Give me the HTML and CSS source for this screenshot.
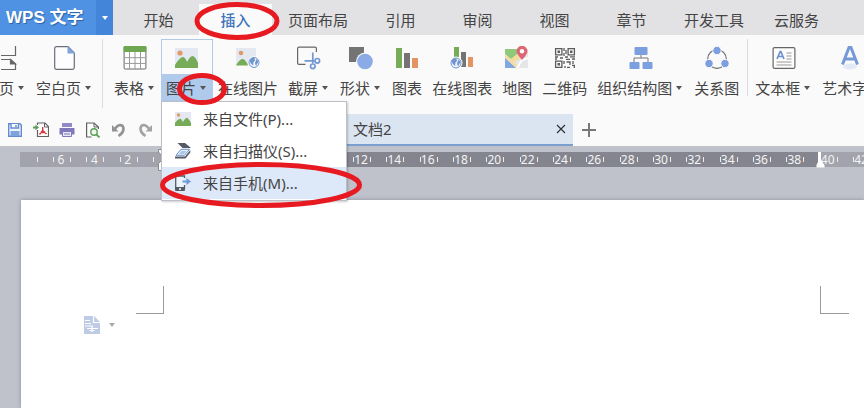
FILE: index.html
```html
<!DOCTYPE html>
<html lang="zh-CN">
<head>
<meta charset="utf-8">
<title>WPS 文字</title>
<link rel="stylesheet" href="styles.css">
</head>
<body>
<header class="topbar">
  <button class="brand" type="button"><span class="brand-name">WPS 文字</span><span class="brand-drop"><i class="caret"></i></span></button>
  <nav class="tabs">
    <a class="tab" href="#">开始</a>
    <a class="tab active" href="#">插入
      <svg class="ring ring-tab" viewBox="0 0 86 38"><ellipse cx="43" cy="19" rx="40" ry="16.5"/></svg></a>
    <a class="tab" href="#">页面布局</a>
    <a class="tab" href="#">引用</a>
    <a class="tab" href="#">审阅</a>
    <a class="tab" href="#">视图</a>
    <a class="tab" href="#">章节</a>
    <a class="tab" href="#">开发工具</a>
    <a class="tab" href="#">云服务</a>
  </nav>
</header>

<section class="ribbon">
  <button class="tool" type="button">
    <span class="tool-icon"><svg viewBox="0 0 24 24" fill="none" stroke="#666" stroke-width="1.2"><path d="M0 9.500H14.500V0M0 13.500H9.500L14.500 18V23.500H0"/><path d="M9.500 13.500V18H14.500Z" fill="#666"/></svg></span>
    <span class="tool-label">页<i class="caret"></i></span>
  </button>
  <button class="tool" type="button">
    <span class="tool-icon"><svg viewBox="0 0 24 24"><path d="M3.500.7H15L21.300 7V21.500Q21.300 23.300 19.500 23.300H3.500Q1.700 23.300 1.700 21.500V2.500Q1.700.7 3.500.7Z" fill="#fdfdfe" stroke="#6b6e78" stroke-width="1.200"/><path d="M14.500 0V7.500H22Z" fill="#7da3dc"/></svg></span>
    <span class="tool-label">空白页<i class="caret"></i></span>
  </button>
  <span class="divider"></span>
  <button class="tool" type="button">
    <span class="tool-icon"><svg viewBox="0 0 24 24"><rect x="1.100" y=".6" width="21.800" height="22.400" rx="1" fill="#fff" stroke="#666"/><path d="M1.500 11.700H22.500M1.500 17.400H22.500M6.500 6V23M12 6V23M17.500 6V23" stroke="#999" fill="none"/><rect x=".6" width="22.800" height="6" rx="1" fill="#6fa650"/></svg></span>
    <span class="tool-label">表格<i class="caret"></i></span>
  </button>
  <div class="menu-host">
    <button class="tool open" type="button" aria-haspopup="menu" aria-expanded="true">
      <span class="tool-icon"><svg viewBox="0 0 24 24"><rect y="2" width="23" height="20" fill="#e3e8f1"/><circle cx="5" cy="7" r="2.600" fill="#e09a69"/><path d="M0 22V19Q5 11 8 11Q10 11 12 16Q15 10 17.500 10Q20 10 23 17V22Z" fill="#76ab57"/></svg></span>
      <span class="tool-label">图片<i class="caret"></i></span>
    </button>
    <div class="menu" role="menu">
      <button class="item" type="button" role="menuitem"><svg viewBox="0 0 16 16"><rect y="1" width="16" height="14" fill="#e3e8f1"/><circle cx="3.500" cy="4" r="1.700" fill="#e09a69"/><path d="M0 15V12Q4 7 6 8L8 11Q11 6 12.500 7Q14 8 16 12V15Z" fill="#76ab57"/></svg>来自文件(P)...</button>
      <button class="item" type="button" role="menuitem"><svg viewBox="0 0 16 16"><path d="M2.500 0H10L16 5H7.500Z" fill="#555b66"/><path d="M6 6.300H14.500L9.500 12.300H1Z" fill="#e6effc" stroke="#6e93cc"/><path d="M6.500 8H11.500L9 11H4Z" fill="#a9c5ec"/><path d="M0 13.500H10L15.300 7V9.500L10.500 15.500H0Z" fill="#555b66"/></svg>来自扫描仪(S)...</button>
      <button class="item current" type="button" role="menuitem"><svg viewBox="0 0 16 16"><path d="M9.500 3V1H.7V13H9.500V10" fill="#edf3fc" stroke="#555b66" stroke-width="1.300"/><path d="M0 12H10V15Q10 16 9 16H1Q0 16 0 15Z" fill="#555b66"/><path d="M4 13.300H6V14.800H4Z" fill="#fff"/><path d="M7.500 5.500H11.500V3L16 6.500L11.500 10V7.500H7.500Z" fill="#6c9bd9"/></svg>来自手机(M)...</button>
      <svg class="ring ring-item" viewBox="0 0 202 46"><ellipse cx="101" cy="23" rx="98.500" ry="20.500"/></svg>
    </div>
    <svg class="ring ring-drop" viewBox="0 0 50 32"><ellipse cx="25" cy="16" rx="22.500" ry="13.500"/></svg>
  </div>
  <button class="tool" type="button">
    <span class="tool-icon"><svg viewBox="0 0 24 24"><rect y="2" width="20" height="17" fill="#e3e8f1"/><circle cx="5" cy="7" r="2.300" fill="#e09a69"/><path d="M0 19.500Q4 12 7 13Q10 14 12 19.500Z" fill="#76ab57"/><circle cx="18" cy="16.500" r="6.200" fill="#fafafa"/><circle cx="18" cy="16.500" r="5" fill="#eef3fb" stroke="#6f95cf"/><path d="M13.500 14L16 12H18.500L19 14.500L17.500 16L17 19.500L14.500 17ZM20.500 13L22.500 15.500L20 20L19 17Z" fill="#6f95cf"/></svg></span>
    <span class="tool-label">在线图片</span>
  </button>
  <button class="tool" type="button">
    <span class="tool-icon"><svg viewBox="0 0 24 24" fill="none"><path d="M8.500 18.400H2Q.6 18.400.6 17V2.500Q.6 1.100 2 1.100H18Q19.400 1.100 19.400 2.500V6" stroke="#666" stroke-width="1.200"/><g stroke="#7397d3" stroke-width="1.700"><path d="M7.500 14.800H17.500M15.800 6.500V17.500"/><circle cx="20.300" cy="14.800" r="2.300"/><circle cx="15.800" cy="20.300" r="2.300"/></g></svg></span>
    <span class="tool-label">截屏<i class="caret"></i></span>
  </button>
  <button class="tool" type="button">
    <span class="tool-icon"><svg viewBox="0 0 24 24"><rect y="1" width="15" height="15" fill="#747474"/><circle cx="16" cy="15.500" r="9" fill="#fafafa"/><circle cx="16" cy="15.500" r="7.800" fill="#8aabe6"/></svg></span>
    <span class="tool-label">形状<i class="caret"></i></span>
  </button>
  <button class="tool" type="button">
    <span class="tool-icon"><svg viewBox="0 0 24 24"><rect x="1" y="2" width="6" height="20" fill="#76ab57"/><rect x="9" y="7" width="6" height="15" fill="#747474"/><rect x="17" y="12" width="6" height="10" fill="#e39462"/></svg></span>
    <span class="tool-label">图表</span>
  </button>
  <button class="tool" type="button">
    <span class="tool-icon"><svg viewBox="0 0 24 24"><rect x="4" y="1" width="5" height="14" fill="#76ab57"/><rect x="11" y="6" width="5" height="15" fill="#747474"/><rect x="18" y="11" width="5" height="10" fill="#e39462"/><circle cx="6" cy="17" r="6.500" fill="#fafafa"/><circle cx="6" cy="17" r="5" fill="#eef3fb" stroke="#6f95cf"/><path d="M1.500 14.500L4 12.500H6.500L7 15L5.500 16.500L5 20L2.500 17.500ZM8.500 13.500L10.500 16L8 20.500L7 17.500Z" fill="#6f95cf"/></svg></span>
    <span class="tool-label">在线图表</span>
  </button>
  <button class="tool" type="button">
    <span class="tool-icon"><svg viewBox="0 0 24 24"><rect y="3" width="23" height="19" fill="#e6e6e8"/><path d="M0 3H14L12 9L6 13L0 8Z" fill="#8fca7b"/><path d="M0 12L11 22H0Z" fill="#83a7df"/><path d="M0 9.500L13 22" stroke="#f4dc9c" stroke-width="2.500"/><path d="M6 13L12 8L15 13L7 17Z" fill="#f4dc9c"/><path d="M12 22L17 14L23 12" stroke="#fff" stroke-width="2" fill="none"/><path d="M17 14Q11.500 8 11.500 5.300A5.300 5.300 0 0 1 22.500 5.300Q22.500 8 17 14Z" fill="#dc6672"/><circle cx="17" cy="5.300" r="2.200" fill="#fff"/></svg></span>
    <span class="tool-label">地图</span>
  </button>
  <button class="tool" type="button">
    <span class="tool-icon"><svg viewBox="0 0 24 24" fill="none" stroke="#5c5c5c" stroke-width="1.300"><path d="M2.600 2.600H8.900V8.900H2.600ZM15.100 2.600H21.400V8.900H15.100ZM2.600 15.100H8.900V21.400H2.600Z"/><path d="M4.500 5.750H7M17 5.750H19.500M4.500 18.250H7" stroke-width="2.500"/><path d="M11 2V5M13 4V8M11 7V10M2 11H5M7 12H10M2 13H4M12 11H15M17 10.800H22M13 13.300H17M19 13H22M11 15V18M13.500 16H17V19M20 15V18M12 20V22M14 21.300H17M19 19.300H22M21.300 20V22"/></svg></span>
    <span class="tool-label">二维码</span>
  </button>
  <button class="tool" type="button">
    <span class="tool-icon"><svg viewBox="0 0 24 24"><path d="M12 8V12M5 16V12H19V16" fill="none" stroke="#777"/><g fill="#7c9fe0"><rect x="5.500" y="1" width="13" height="8" rx="1"/><rect x=".5" y="16" width="10" height="7" rx="1"/><rect x="13.500" y="16" width="10" height="7" rx="1"/></g></svg></span>
    <span class="tool-label">组织结构图<i class="caret"></i></span>
  </button>
  <button class="tool" type="button">
    <span class="tool-icon"><svg viewBox="0 0 24 24"><circle cx="12" cy="13" r="9.300" fill="none" stroke="#6b6b6b" stroke-width="1.200"/><g fill="#7c9fe0" stroke="#fafafa"><circle cx="12" cy="4.500" r="4.200"/><circle cx="4" cy="17.500" r="4.200"/><circle cx="20" cy="17.500" r="4.200"/></g></svg></span>
    <span class="tool-label">关系图</span>
  </button>
  <span class="divider short"></span>
  <button class="tool" type="button">
    <span class="tool-icon"><svg viewBox="0 0 24 24"><rect x="1.100" y="1.600" width="21.800" height="20.800" rx="1.500" fill="#fcfcfc" stroke="#666" stroke-width="1.200"/><path d="M5 13L8.200 5.500H8.800L12 13M6 10.500H11" fill="none" stroke="#6b92cd" stroke-width="1.700"/><path d="M14.500 7H19.500M14.500 10H19.500M14.500 13H19.500M4.500 16H19.500M4.500 19H19.500" stroke="#999"/></svg></span>
    <span class="tool-label">文本框<i class="caret"></i></span>
  </button>
  <button class="tool" type="button">
    <span class="tool-icon"><svg viewBox="0 0 24 24"><ellipse cx="11" cy="20.500" rx="7" ry="3" fill="#e3eaf6"/><path d="M3.500 18.500L10 1.500H12L18.500 18.500M6 13H16" fill="none" stroke="#7699d8" stroke-width="3"/></svg></span>
    <span class="tool-label">艺术字<i class="caret"></i></span>
  </button>
</section>

<div class="docbar">
  <div class="quick">
    <button type="button" aria-label="保存"><svg viewBox="0 0 16 16"><path d="M1.700 1.700H13L14.300 3V14.300H1.700Z" fill="#eef4fd" stroke="#648bd0" stroke-width="1.400"/><path d="M4 2V6H11.500V2" fill="#fff" stroke="#648bd0" stroke-width="1.400"/><path d="M3.500 9H12.500V14H3.500Z" fill="#7fa3de"/><path d="M9 3V5" stroke="#648bd0" stroke-width="1.500"/></svg></button>
    <button type="button" aria-label="输出为PDF"><svg viewBox="0 0 16 16"><path d="M4.500 3V1H12L15.500 4.500V14.500H4.500V8" fill="#fff" stroke="#606060" stroke-width="1.200"/><path d="M11.500 1V5H15.500" fill="none" stroke="#606060"/><path d="M9.700 5V8.500L6.500 12.500M9.700 8.500L13.500 12M7.500 10.500H12.500" fill="none" stroke="#d3363c" stroke-width="1.400"/><path d="M0 6.500V4.500H2.500V2.500L6 5.500L2.500 8.300V6.500Z" fill="#5d9b5a"/></svg></button>
    <button type="button" aria-label="打印"><svg viewBox="0 0 16 16"><path d="M3 1H13V5H3Z" fill="#908ac6"/><path d="M.5 6H15.500V12.500H.5Z" fill="#7f79bc"/><path d="M3.500 9.500H12.500V14.500H3.500Z" fill="#e9e7f7" stroke="#7f79bc"/><path d="M5 12H11" stroke="#7f79bc"/></svg></button>
    <button type="button" aria-label="打印预览"><svg viewBox="0 0 16 16"><path d="M6.500 15H1.600V1H9L13.400 5V7" fill="#fff" stroke="#606060" stroke-width="1.200"/><path d="M9 1V5H13" fill="none" stroke="#606060"/><circle cx="9" cy="10" r="3.200" fill="#eef7ec" stroke="#5f9f58" stroke-width="1.400"/><path d="M11.300 12.300L14.500 15.500" stroke="#5f9f58" stroke-width="1.800"/></svg></button>
    <button type="button" aria-label="撤销"><svg viewBox="0 0 16 16"><path d="M3.500 7.500Q6.500 3 9.500 3Q12.700 3.500 12.500 7.500Q12 11 7.500 14" fill="none" stroke="#939393" stroke-width="2.600"/><path d="M1 3V9.500H7.500Z" fill="#939393"/></svg></button>
    <button type="button" aria-label="恢复"><svg viewBox="0 0 16 16"><path d="M12.500 7.500Q9.500 3 6.500 3Q3.300 3.500 3.500 7.500Q4 11 8.500 14" fill="none" stroke="#a3a3a3" stroke-width="2.600"/><path d="M15 3V9.500H8.500Z" fill="#a3a3a3"/></svg></button>
  </div>
  <div class="doc-tab">
    <span class="doc-name">文档2</span>
    <button class="close" type="button" aria-label="关闭"><svg viewBox="0 0 10 10"><path d="M1 1L9 9M9 1L1 9" stroke="#333" stroke-width="1.200"/></svg></button>
  </div>
  <button class="add" type="button" aria-label="新建"><svg viewBox="0 0 14 14"><path d="M7 0V14M0 7H14" stroke="#777" stroke-width="2"/></svg></button>
</div>

<main class="workspace">
  <div class="ruler">
    <div class="scale">
      <span></span><span>6</span><span>4</span><span>2</span><span></span><span></span><span></span><span></span><span></span><span></span><span>12</span><span>14</span><span>16</span><span>18</span><span>20</span><span>22</span><span>24</span><span>26</span><span>28</span><span>30</span><span>32</span><span>34</span><span>36</span><span>38</span><span>40</span><span>42</span><span></span>
    </div>
    <svg class="marker left" viewBox="0 0 10 22"><path d="M.5 .5H9.500V3L5 8L.5 3ZM5 10L9.500 14.500V21.500H.5V14.500Z" fill="#fff" stroke="#888"/></svg>
    <svg class="marker right" viewBox="0 0 10 22"><path d="M2 0H5V8L8.500 13V15.500H.5V13L2 10Z" fill="#fff"/></svg>
  </div>
  <article class="page">
    <div class="margin-row"><span class="corner corner-left"></span><span class="corner corner-right"></span></div>
    <button class="para" type="button" aria-label="段落布局"><svg viewBox="0 0 16 18"><path d="M0 0H10L16 6V18H0Z" fill="#bdcbe5"/><path d="M9.500 0V6.500H16M1 4.500H6M1 7.500H7M1 10H9M3 12.500H14M8 10V16M5.500 14.500H10.500" fill="none" stroke="#fff" stroke-width="1.200"/></svg><i class="caret"></i></button>
  </article>
</main>
</body>
</html>
```

FILE: styles.css
```css
* {
  box-sizing: border-box;
}

body {
  margin: 0;
  min-height: 100vh;
  display: flex;
  flex-direction: column;
  overflow-x: hidden;
  background: #fafafa;
  color: #444;
  font: 15px/20px "Noto Sans", "Noto Sans CJK SC", sans-serif;
}

button {
  margin: 0;
  padding: 0;
  border: 0;
  background: none;
  color: inherit;
  font: inherit;
}

svg {
  display: block;
  flex: none;
}

.caret {
  flex: none;
  border: 3px solid transparent;
  border-top: 4px solid #555;
  border-bottom: 0;
}

/* Title bar and tabs */
.topbar {
  display: flex;
  height: 35px;
  background: #e2e2e4;
}

.brand {
  display: flex;
  flex: none;
  width: 113px;
  background: #4f92e3;
  color: #fff;
  font: bold 17px/36px "Liberation Sans", "Noto Sans CJK SC", sans-serif;
  text-shadow: 1px 1px 1px #2c62a8;
}

.brand-name {
  flex: 1;
  padding-left: 6px;
  text-align: left;
  white-space: nowrap;
}

.brand-drop {
  display: flex;
  align-items: center;
  justify-content: center;
  width: 17px;
  height: 35px;
  background: #4385d8;
}

.brand-drop .caret {
  border-top-color: #fff;
}

.tabs {
  display: flex;
  margin-left: 7px;
}

.tab {
  position: relative;
  flex: none;
  min-width: 77px;
  padding: 0 14px;
  color: #444;
  line-height: 40px;
  text-align: center;
  text-decoration: none;
}

.tab.active {
  min-width: 73px;
  margin: 0 2px;
  background: linear-gradient(#e2e2e4 4px, #fafafa 4px);
  color: #3f74ba;
  font-weight: 500;
}

/* Highlight rings */
.ring {
  position: absolute;
  z-index: 3;
  fill: none;
  stroke: #e61a20;
  stroke-width: 5;
  pointer-events: none;
}

.ring-tab {
  top: 2px;
  left: -5px;
  width: 86px;
  height: 38px;
}

.ring-drop {
  top: 34px;
  left: 16px;
  width: 50px;
  height: 32px;
}

.ring-item {
  top: 60px;
  left: -2px;
  width: 202px;
  height: 46px;
}

/* Ribbon */
.ribbon {
  display: flex;
  align-items: flex-start;
  height: 78px;
  margin-left: -6px;
  padding-top: 4px;
}

.tool {
  display: flex;
  flex: none;
  flex-direction: column;
  align-items: stretch;
}

.tool-icon {
  display: flex;
  align-items: center;
  justify-content: center;
  height: 36px;
  padding-top: 2px;
}

.tool-icon svg {
  width: 24px;
  height: 24px;
}

.tool-label {
  display: flex;
  align-items: center;
  height: 26px;
  padding: 0 5px;
  white-space: nowrap;
}

.tool-label .caret {
  margin: 0 2px 0 4px;
}

.divider {
  flex: none;
  width: 1px;
  height: 69px;
  margin: 0 6px 0 4px;
  background: #dcdce0;
}

.divider.short {
  height: 57px;
  margin: 0 2px 0 3px;
}

.menu-host {
  position: relative;
  flex: none;
}

.tool.open .tool-icon {
  box-shadow: inset 0 0 0 1px #b4c9e6;
}

.tool.open .tool-label {
  background: #b0caec;
}

.menu {
  position: absolute;
  z-index: 2;
  top: 62px;
  left: 0;
  width: 186px;
  padding: 1px 0;
  border: 1px solid #bcbfc8;
  background: #fff;
  box-shadow: 1px 1px 2px #0003;
}

.item {
  display: flex;
  align-items: center;
  gap: 12px;
  width: 100%;
  height: 32px;
  padding-left: 13px;
  white-space: nowrap;
}

.item svg {
  width: 16px;
  height: 16px;
}

.item.current {
  background: #dde8f8;
}

/* Quick tools and document tabs */
.docbar {
  display: flex;
  height: 33px;
}

.quick {
  display: flex;
  align-items: center;
  width: 330px;
  padding-left: 2px;
}

.quick button {
  display: flex;
  justify-content: center;
  width: 26px;
}

.quick svg {
  width: 16px;
  height: 16px;
}

.doc-tab {
  display: flex;
  align-items: center;
  justify-content: space-between;
  width: 243px;
  margin-top: 1px;
  padding: 0 7px 0 23px;
  border-bottom: 2px solid #7b9fcf;
  background: #dae5f1;
}

.close svg {
  width: 10px;
  height: 10px;
}

.add {
  padding: 0 9px;
}

.add svg {
  width: 14px;
  height: 14px;
}

/* Ruler and page */
.workspace {
  display: flex;
  flex: 1;
  flex-direction: column;
  background: #bfc1cb;
}

.ruler {
  position: relative;
  height: 15px;
  margin: 6px 0 33px 20px;
  background: linear-gradient(90deg, #a2a3ac 141px, #84858e 141px 800px, #a2a3ac 800px);
}

.scale {
  display: grid;
  grid-template-columns: repeat(27, 1fr);
  width: 900px;
  margin-left: -9px;
  clip-path: inset(0 0 0 16px);
}

.scale span {
  height: 15px;
  background:
    linear-gradient(#eee, #eee) 27% 50% / 1px 5px no-repeat,
    linear-gradient(#eee, #eee) 79% 50% / 1px 5px no-repeat;
  color: #f4f4f6;
  font-size: 12px;
  line-height: 15px;
  text-align: center;
}

.marker {
  position: absolute;
  width: 10px;
  height: 22px;
}

.marker.left {
  top: -3px;
  left: 138px;
}

.marker.right {
  top: 0;
  left: 796px;
}

.page {
  flex: 1;
  margin-left: 21px;
  padding: 86px 15px 0 63px;
  background: #fff;
  box-shadow: 0 0 4px #8c8f9b;
}

.margin-row {
  display: flex;
  justify-content: space-between;
  padding-left: 52px;
}

.corner {
  width: 28px;
  height: 28px;
  border: 0 solid #999;
  border-bottom-width: 1px;
}

.corner-left {
  border-right-width: 1px;
}

.corner-right {
  width: 29px;
  border-left-width: 1px;
}

.para {
  display: flex;
  align-items: center;
  gap: 9px;
  margin-top: 2px;
}

.para svg {
  width: 16px;
  height: 18px;
}

.para .caret {
  border-top-color: #aaa;
}
```
